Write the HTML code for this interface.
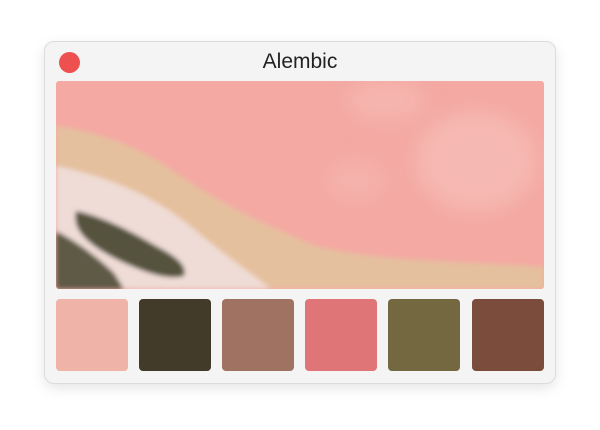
<!DOCTYPE html>
<html><head><style>
html,body{margin:0;padding:0;background:#fff;}
body{width:600px;height:430px;position:relative;overflow:hidden;font-family:"Liberation Sans",sans-serif;}
.win{position:absolute;left:45px;top:42px;width:510px;height:341px;background:#f5f4f4;border-radius:9px;box-shadow:0 0 0 1px #dcdcdc,0 4px 14px rgba(0,0,0,.12);}
.dot{position:absolute;left:59px;top:52px;width:21px;height:21px;border-radius:50%;background:#ee5050;}
.title{position:absolute;left:0;width:600px;top:50px;text-align:center;font-size:21px;color:#222;}
.img{position:absolute;left:56px;top:81px;width:488px;height:208px;border-radius:3px;overflow:hidden;}
.sw{position:absolute;top:299px;width:72px;height:72px;border-radius:4px;}
</style></head><body>
<div class="win"></div>
<div class="dot"></div>
<div class="title">Alembic</div>
<div class="img"><svg width="488" height="208" viewBox="0 0 488 208">
<defs>
<filter id="b"><feGaussianBlur stdDeviation="2.5"/></filter>
<filter id="b2"><feGaussianBlur stdDeviation="10"/></filter>
</defs>
<rect width="488" height="208" fill="#f4a9a3"/>
<g filter="url(#b2)" opacity=".6">
<ellipse cx="420" cy="80" rx="60" ry="50" fill="#f8c3bd"/>
<ellipse cx="330" cy="20" rx="40" ry="20" fill="#f8bdb7"/>
<ellipse cx="300" cy="100" rx="30" ry="20" fill="#f6b8b2"/>
</g>
<g filter="url(#b)">
<path d="M0,45 C40,50 80,65 110,85 C160,120 200,140 260,165 C330,182 420,180 488,186 L488,208 L0,208 Z" fill="#e5c09e"/>
<path d="M0,85 C50,95 100,115 140,150 C170,175 195,192 215,208 L0,208 Z" fill="#efdcd6"/>
<path d="M20,130 C45,135 75,150 100,165 C120,175 132,185 128,195 C110,200 85,190 60,178 C35,165 15,150 20,130 Z" fill="#55533c"/>
<path d="M0,150 C20,160 40,175 58,192 L68,208 L0,208 Z" fill="#5f5a44"/>
</g>
</svg></div>
<div class="sw" style="left:56px;background:#efb3a8"></div>
<div class="sw" style="left:139px;background:#423b2a"></div>
<div class="sw" style="left:222px;background:#a07262"></div>
<div class="sw" style="left:305px;background:#df7576"></div>
<div class="sw" style="left:388px;background:#736840"></div>
<div class="sw" style="left:472px;background:#7b4c3c"></div>
</body></html>
